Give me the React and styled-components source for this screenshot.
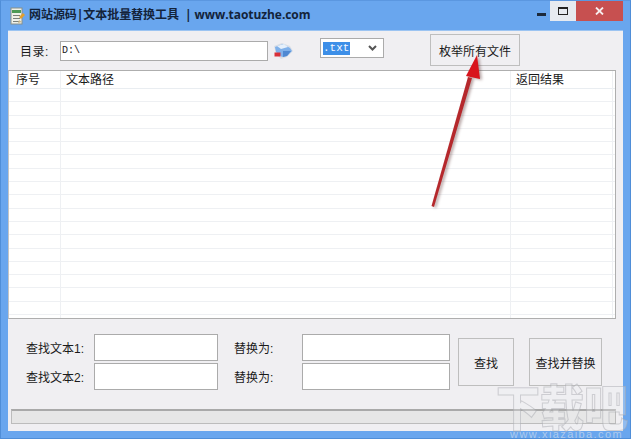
import React from "react";
import styled, { createGlobalStyle } from "styled-components";

const cjk = `"Liberation Sans", "Noto Sans CJK SC", sans-serif`;

const Global = createGlobalStyle`
  html, body {
    margin: 0;
    padding: 0;
    background: #69a6ee;
  }
  * {
    box-sizing: border-box;
  }
`;

const Window = styled.div`
  position: relative;
  width: 631px;
  height: 439px;
  overflow: hidden;
  background: #69a6ee;
  border: 1px solid #4f8ed8;
  border-top-color: #5b97e0;
  display: flex;
  flex-direction: column;
  font-family: ${cjk};
  font-size: 12px;
  color: #1a1a1a;
`;

const TitleBar = styled.div`
  height: 29px;
  flex: none;
  display: flex;
  align-items: flex-start;
  padding-left: 9px;
`;

const AppIcon = styled.svg`
  width: 16px;
  height: 18px;
  margin-top: 6px;
  flex: none;
`;

const Title = styled.div`
  margin: 5px 0 0 3px;
  font-size: 12px;
  line-height: 18px;
  font-weight: 700;
  color: #13233a;
  white-space: pre;
  letter-spacing: -0.06px;
  font-family: "Open Sans", "Noto Sans CJK SC", sans-serif;
`;

const Controls = styled.div`
  margin-left: auto;
  margin-right: 7px;
  display: flex;
  height: 20px;
`;

const Control = styled.div`
  height: 20px;
  width: ${(p) => p.$w}px;
  background: ${(p) => p.$bg || "transparent"};
  display: flex;
  align-items: center;
  justify-content: center;
`;

const Client = styled.div`
  flex: 1;
  margin: 0 7px 7px 7px;
  background: #f0eff2;
  display: flex;
  flex-direction: column;
  border-top: 1px solid #9cc4f2;
`;

const Toolbar = styled.div`
  height: 39px;
  flex: none;
  display: flex;
  align-items: flex-start;
  padding-left: 12px;
`;

const DirLabel = styled.div`
  width: 40px;
  margin-top: 12px;
  font-size: 12px;
  line-height: 18px;
  letter-spacing: 0.5px;
`;

const TextBox = styled.div`
  width: ${(p) => p.$w}px;
  height: ${(p) => p.$h}px;
  flex: none;
  background: #fff;
  border: 1px solid #ababab;
  font-family: "Liberation Mono", monospace;
  font-size: 10px;
  line-height: 17px;
  padding-left: 1px;
`;

const DirBox = styled(TextBox)`
  margin-top: 10px;
`;

const FolderIcon = styled.svg`
  width: 22px;
  height: 20px;
  margin: 10px 0 0 4px;
  flex: none;
`;

const TypeSelect = styled.div`
  width: 64px;
  height: 20px;
  margin: 7px 0 0 26px;
  flex: none;
  background: #fff;
  border: 1px solid #ababab;
  display: flex;
  align-items: center;
  justify-content: space-between;
  padding: 0 6px 0 2px;
`;

const Selected = styled.span`
  background: #3d8fe8;
  color: #f4f8ff;
  font-family: "Liberation Mono", monospace;
  font-size: 11px;
  line-height: 13px;
  padding-right: 1px;
`;

const Button = styled.div`
  flex: none;
  width: ${(p) => p.$w}px;
  height: ${(p) => p.$h}px;
  display: flex;
  align-items: center;
  justify-content: center;
  background: #f0eff2;
  border: 1px solid #bebebe;
  font-size: 12px;
`;

const ScanButton = styled(Button)`
  margin: 3px 0 0 46px;
`;

const Table = styled.div`
  height: 249px;
  width: 608px;
  flex: none;
  background: #fff;
  border: 1px solid #aeaeae;
  border-left-color: #c4c4c4;
  display: flex;
  flex-direction: column;
  overflow: hidden;
`;

const HeaderRow = styled.div`
  height: 18px;
  flex: none;
  display: grid;
  grid-template-columns: 52px 450px 102px 1fr;
  border-bottom: 1px solid #e9edf1;
`;

const Row = styled.div`
  height: 13.3px;
  flex: none;
  display: grid;
  grid-template-columns: 52px 450px 102px 1fr;
  border-bottom: 1px solid #eef0f3;
`;

const Cell = styled.div`
  border-right: 1px solid #eef0f3;
  padding-left: 5px;
  font-size: 12px;
  line-height: 18px;
  white-space: nowrap;
  &:first-child {
    padding-left: 7px;
  }
`;

const Bottom = styled.div`
  flex: 1;
  display: flex;
  flex-direction: column;
`;

const FormArea = styled.div`
  display: flex;
  padding: 15px 0 0 18px;
`;

const Fields = styled.div`
  display: grid;
  grid-template-columns: 68px 124px 84px 148px;
  grid-auto-rows: 27px;
  row-gap: 2px;
  width: 424px;
  flex: none;
`;

const FieldLabel = styled.div`
  font-size: 12px;
  line-height: 31px;
  white-space: nowrap;
  padding-left: ${(p) => p.$indent || 0}px;
`;

const Actions = styled.div`
  display: flex;
  gap: 15px;
  margin: 4px 0 0 8px;
`;

const Progress = styled.div`
  height: 15px;
  margin: 19px 7px 0 3px;
  background: #e6e6e6;
  border: 1px solid #bcbcbc;
  border-top: 2px solid #a9a9a9;
`;

const ArrowLayer = styled.svg`
  position: absolute;
  left: -1px;
  top: -1px;
  width: 631px;
  height: 439px;
  pointer-events: none;
  filter: drop-shadow(2px 1px 1.5px rgba(90, 50, 50, 0.45));
`;

const Watermark = styled.div`
  position: absolute;
  right: 2px;
  bottom: 9px;
  width: 132px;
  text-align: center;
  font-family: "Noto Sans CJK SC", sans-serif;
  font-weight: 900;
  font-size: 44px;
  line-height: 44px;
  color: rgba(240, 240, 242, 0.3);
  -webkit-text-stroke: 1px rgba(170, 172, 178, 0.5);
  transform: scaleY(1.12);
  transform-origin: bottom;
  pointer-events: none;
  white-space: nowrap;
`;

const WatermarkUrl = styled.div`
  position: absolute;
  right: 7px;
  bottom: 0;
  font-family: "Liberation Sans", sans-serif;
  font-size: 11px;
  letter-spacing: 1.4px;
  line-height: 8px;
  color: rgba(220, 226, 236, 0.6);
  pointer-events: none;
`;

const rows = Array.from({ length: 18 }, (_, i) => i);

function App() {
  return (
    <Window>
      <Global />
      <TitleBar>
        <AppIcon viewBox="0 0 16 18">
          <rect x="1" y="1" width="11" height="16" fill="#eef0e8" stroke="#8a9088" />
          <rect x="2" y="3" width="9" height="3" fill="#4d9a55" />
          <rect x="3" y="8" width="7" height="1" fill="#7a807a" />
          <rect x="3" y="11" width="7" height="1" fill="#7a807a" />
          <rect x="3" y="14" width="7" height="1" fill="#7a807a" />
          <path d="M9 10l4-4 2 2-4 4z" fill="#e0a030" />
          <path d="M9 13l3 2-4 1z" fill="#c9b78a" />
        </AppIcon>
        <Title>网站源码|文本批量替换工具  | www.taotuzhe.com</Title>
        <Controls>
          <Control $w={18}>
            <svg width="9" height="3" viewBox="0 0 9 3" style={{ marginTop: 7 }}>
              <rect width="9" height="3" fill="#1c2a3c" />
            </svg>
          </Control>
          <Control $w={26} $bg="#e6eaf0">
            <svg width="10" height="8" viewBox="0 0 10 8">
              <rect x="0.5" y="0.5" width="9" height="7" fill="none" stroke="#222" />
              <rect x="0" y="0" width="10" height="2" fill="#222" />
            </svg>
          </Control>
          <Control $w={47} $bg="#c75050">
            <svg width="9" height="8" viewBox="0 0 9 8">
              <path d="M1 0.5l7 7M8 0.5l-7 7" stroke="#f6eeee" strokeWidth="1.8" />
            </svg>
          </Control>
        </Controls>
      </TitleBar>

      <Client>
        <Toolbar>
          <DirLabel>目录:</DirLabel>
          <DirBox $w={208} $h={20}>D:\</DirBox>
          <FolderIcon viewBox="0 0 22 20">
            <path d="M2 5l8-3 8 3 3 5-6 6-6 2-5-5z" fill="#d9dee6" />
            <path d="M3 6l8-3 7 4 2 3-5 5-5 1-6-5z" fill="#7fb0ea" />
            <path d="M5 5l7-2 4 3-7 2z" fill="#e6f0fb" />
            <path d="M11 10l8 0-4 5-4 1z" fill="#4f88d2" />
            <rect x="2.5" y="11.5" width="6" height="4" fill="#d8303a" />
          </FolderIcon>
          <TypeSelect>
            <Selected>.txt</Selected>
            <svg width="9" height="6" viewBox="0 0 9 6">
              <path d="M1 1l3.5 3.5L8 1" fill="none" stroke="#555" strokeWidth="2" />
            </svg>
          </TypeSelect>
          <ScanButton $w={90} $h={32}>枚举所有文件</ScanButton>
        </Toolbar>

        <Table>
          <HeaderRow>
            <Cell>序号</Cell>
            <Cell>文本路径</Cell>
            <Cell>返回结果</Cell>
            <Cell />
          </HeaderRow>
          {rows.map((r) => (
            <Row key={r}>
              <Cell />
              <Cell />
              <Cell />
              <Cell />
            </Row>
          ))}
        </Table>

        <Bottom>
          <FormArea>
            <Fields>
              <FieldLabel>查找文本1:</FieldLabel>
              <TextBox $w={124} $h={27} />
              <FieldLabel $indent={16}>替换为:</FieldLabel>
              <TextBox $w={148} $h={27} />
              <FieldLabel>查找文本2:</FieldLabel>
              <TextBox $w={124} $h={27} />
              <FieldLabel $indent={16}>替换为:</FieldLabel>
              <TextBox $w={148} $h={27} />
            </Fields>
            <Actions>
              <Button $w={56} $h={48}>查找</Button>
              <Button $w={73} $h={48}>查找并替换</Button>
            </Actions>
          </FormArea>
          <Progress />
        </Bottom>
      </Client>

      <ArrowLayer viewBox="0 0 631 439">
        <path d="M431.5 206L434 207L472 78L468 77Z" fill="#b5282c" />
        <path d="M477 55L466 76L480 79Z" fill="#d8141c" />
      </ArrowLayer>
      <Watermark>下载吧</Watermark>
      <WatermarkUrl>www.xiazaiba.com</WatermarkUrl>
    </Window>
  );
}

export default App;
